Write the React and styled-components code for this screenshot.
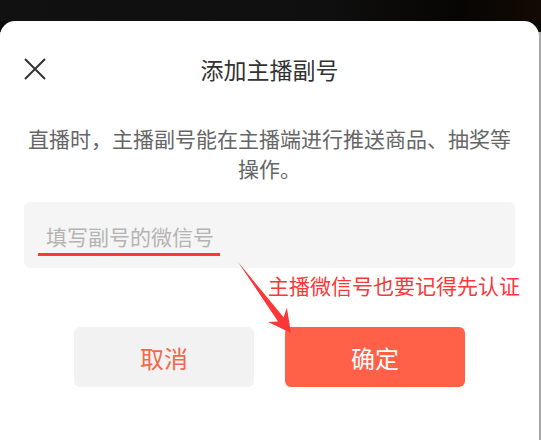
import React from "react";
import styled, { createGlobalStyle } from "styled-components";

const GlobalStyle = createGlobalStyle`
  html, body {
    margin: 0;
    padding: 0;
  }
  body {
    font-family: "Noto Sans CJK SC", "Noto Sans", sans-serif;
    background: #a9a9a9;
  }
`;

const App = () => {
  return (
    <Page>
      <GlobalStyle />
      <TopBand />

      <Sheet>
        <Header>
          <CloseButton aria-label="关闭">
            <svg width="22" height="22" viewBox="0 0 22 22">
              <path d="M1 1 L21 21 M21 1 L1 21" stroke="#333" strokeWidth="2" fill="none" />
            </svg>
          </CloseButton>
          <Title>添加主播副号</Title>
          <span />
        </Header>

        <Description>
          直播时，主播副号能在主播端进行推送商品、抽奖等
          <br />
          操作。
        </Description>

        <InputBox>
          <Input placeholder="填写副号的微信号" />
          <Underline />
        </InputBox>

        <Actions>
          <Button>取消</Button>
          <Button $primary>确定</Button>
        </Actions>
      </Sheet>

      {/* red hand-drawn note on top of the screenshot */}
      <Overlay>
        <svg width="541" height="440" viewBox="0 0 541 440">
          <polygon
            points="238,262 283.6,317.3 286.9,307.8 291,333 268,322 278,321.5"
            fill="#fb3737"
          />
        </svg>
        <Note>主播微信号也要记得先认证</Note>
      </Overlay>
    </Page>
  );
};

const Page = styled.div`
  position: relative;
  width: 541px;
  height: 440px;
  overflow: hidden;
  display: flex;
  flex-direction: column;
  background: linear-gradient(to bottom, #0d0b09 0 32px, #a9a9a9 32px);
`;

const TopBand = styled.div`
  height: 21px;
  flex: none;
  background: linear-gradient(to right, #111111 0%, #0f0f0f 60%, #070503 85%, #120a04 100%);
`;

const Sheet = styled.div`
  flex: 1;
  width: 539px;
  background: #ffffff;
  border-radius: 15px 15px 0 0;
  position: relative;
  display: flex;
  flex-direction: column;
  padding: 0 24px;
  box-sizing: border-box;
`;

const Header = styled.div`
  display: grid;
  grid-template-columns: 1fr auto 1fr;
  align-items: center;
  height: 34px;
  margin-top: 31px;
`;

const CloseButton = styled.button`
  justify-self: start;
  width: 22px;
  height: 22px;
  padding: 0;
  border: none;
  background: none;
  display: flex;
  cursor: pointer;
`;

const Title = styled.h1`
  margin: 0;
  font-size: 23px;
  font-weight: 400;
  color: #333333;
  line-height: 34px;
`;

const Description = styled.p`
  margin: 37px -12px 0;
  font-size: 21px;
  line-height: 30px;
  color: #666666;
  text-align: center;
  white-space: nowrap;
`;

const InputBox = styled.div`
  position: relative;
  margin-top: 19px;
  height: 66px;
  border-radius: 6px;
  background: #f5f5f5;
  display: flex;
  align-items: center;
  padding: 0 22px;
`;

const Input = styled.input`
  flex: 1;
  border: none;
  outline: none;
  background: transparent;
  font-family: inherit;
  font-size: 21px;
  color: #333;
  padding: 0;
  margin-top: 2px;

  &::placeholder {
    color: #b4b4b4;
  }
`;

const Underline = styled.div`
  position: absolute;
  left: 14px;
  top: 51px;
  width: 182px;
  height: 3px;
  background: #fb3737;
`;

const Actions = styled.div`
  display: flex;
  justify-content: center;
  gap: 31px;
  margin-top: 59px;
`;

const Button = styled.button`
  width: 180px;
  height: 60px;
  border: none;
  border-radius: 6px;
  font-family: inherit;
  font-size: 24px;
  cursor: pointer;
  background: ${(p) => (p.$primary ? "#ff6047" : "#f2f2f2")};
  color: ${(p) => (p.$primary ? "#ffffff" : "#f2684c")};
`;

const Overlay = styled.div`
  position: absolute;
  inset: 0;
  pointer-events: none;

  svg {
    position: absolute;
    left: 0;
    top: 0;
  }
`;

const Note = styled.div`
  position: absolute;
  left: 268px;
  top: 272px;
  font-size: 21px;
  line-height: 26px;
  color: #fb3737;
  white-space: nowrap;
`;

export default App;
